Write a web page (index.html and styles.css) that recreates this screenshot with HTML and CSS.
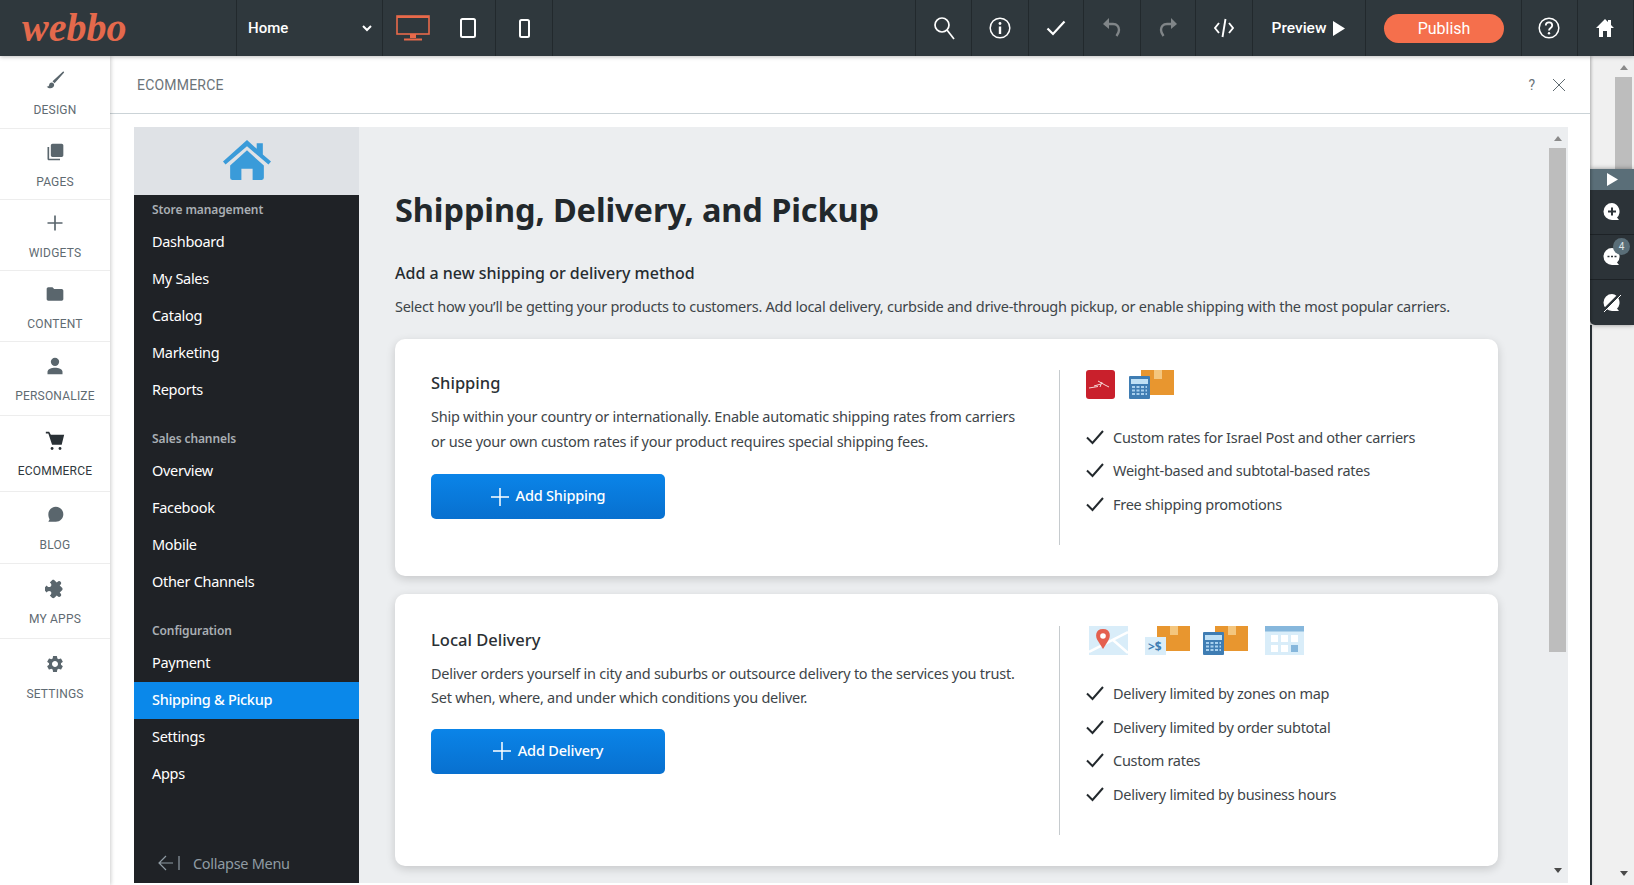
FILE: index.html
```html
<!DOCTYPE html>
<html lang="en">
<head>
    <meta charset="UTF-8">
    <meta name="viewport" content="width=device-width, initial-scale=1.0">
    <title>Webbo - Ecommerce</title>
    <link rel="stylesheet" href="styles.css">
</head>
<body>

<svg class="defs" width="0" height="0">
    <symbol id="check" viewBox="0 0 18 16"><path d="M1 8.5 6.5 14 17 2" fill="none" stroke="#23292d" stroke-width="2"/></symbol>
    <symbol id="box" viewBox="0 0 33 25"><rect width="33" height="25" fill="#e8962f"/><rect x="13" width="8" height="9" fill="#f4c67e"/></symbol>
    <symbol id="calc" viewBox="0 0 21 23"><rect width="21" height="23" rx="1" fill="#3f7db3"/><rect x="2" y="3" width="17" height="5" fill="#bfe0f5"/><path d="M3 11h15M3 14.5h15M3 18h15" stroke="#a8d0ee" stroke-width="2" stroke-dasharray="3 1.5"/></symbol>
</svg>

<header class="topbar">
    <div class="logo-cell"><span class="logo">webbo</span></div>
    <div class="page-select">
        <span>Home</span>
        <svg width="10" height="7" viewBox="0 0 10 7"><path d="M1 1l4 4 4-4" fill="none" stroke="#fff" stroke-width="2"/></svg>
    </div>
    <div class="devices">
        <div class="device device-desktop">
            <svg width="34" height="26" viewBox="0 0 34 26"><rect x="1" y="1" width="32" height="18" fill="none" stroke="#e8694a" stroke-width="1.6"/><rect x="1" y="1" width="32" height="2" fill="#e8694a"/><rect x="14" y="19" width="6" height="4" fill="#e8694a"/><rect x="8" y="23.5" width="18" height="2" fill="#e8694a"/></svg>
        </div>
        <div class="device">
            <svg width="16" height="20" viewBox="0 0 16 20"><rect x="1" y="1" width="14" height="18" rx="1.5" fill="none" stroke="#fff" stroke-width="2"/></svg>
        </div>
    </div>
    <div class="device device-phone">
        <svg width="11" height="19" viewBox="0 0 11 19"><rect x="1" y="1" width="9" height="17" rx="1.5" fill="none" stroke="#fff" stroke-width="2"/></svg>
    </div>
    <div class="topbar-space"></div>
    <div class="tool">
        <svg width="22" height="24" viewBox="0 0 22 24"><circle cx="9" cy="9" r="7" fill="none" stroke="#fff" stroke-width="1.7"/><path d="M14 14l7 9" stroke="#fff" stroke-width="1.7"/></svg>
    </div>
    <div class="tool tool-w57">
        <svg width="22" height="22" viewBox="0 0 22 22"><circle cx="11" cy="11" r="9.8" fill="none" stroke="#fff" stroke-width="1.5"/><circle cx="11" cy="6.5" r="1.4" fill="#fff"/><rect x="9.8" y="9.5" width="2.4" height="7.5" fill="#fff"/></svg>
    </div>
    <div class="tool tool-w55">
        <svg width="20" height="16" viewBox="0 0 20 16"><path d="M1.5 8.5 7 14 18.5 1.5" fill="none" stroke="#fff" stroke-width="2.2"/></svg>
    </div>
    <div class="tool tool-w57">
        <svg width="20" height="20" viewBox="0 0 20 20"><path d="M5 6h6c4 0 6 3 6 6 0 2-1 4-2.500 6" fill="none" stroke="#808588" stroke-width="2.400"/><path d="M7 0v11L1 6z" fill="#808588"/></svg>
    </div>
    <div class="tool tool-w55">
        <svg width="20" height="20" viewBox="0 0 20 20"><path d="M15 6H9c-4 0-6 3-6 6 0 2 1 4 2.500 6" fill="none" stroke="#808588" stroke-width="2.400"/><path d="M13 0v11l6-5z" fill="#808588"/></svg>
    </div>
    <div class="tool tool-w57">
        <svg width="20" height="20" viewBox="0 0 20 20"><path d="M5 5l-4 5 4 5M15 5l4 5-4 5M11.500 1 8.500 19" fill="none" stroke="#fff" stroke-width="1.900"/></svg>
    </div>
    <div class="preview">
        <span>Preview</span>
        <svg width="12" height="15" viewBox="0 0 12 15"><path d="M0 0l12 7.500L0 15z" fill="#fff"/></svg>
    </div>
    <div class="publish-cell"><button class="publish">Publish</button></div>
    <div class="tool tool-end">
        <svg width="22" height="22" viewBox="0 0 22 22"><circle cx="11" cy="11" r="9.800" fill="none" stroke="#fff" stroke-width="1.500"/><path d="M7.800 8.500c0-4.200 6.400-4.200 6.400 0 0 2.500-3.200 2.500-3.200 5" fill="none" stroke="#fff" stroke-width="1.800"/><circle cx="11" cy="16.300" r="1.200" fill="#fff"/></svg>
    </div>
    <div class="tool tool-end">
        <svg width="18" height="18" viewBox="0 0 18 18"><path d="M9 0 0 9h3v9h4v-6h4v6h4V9h3l-3-3V1h-3v2z" fill="#fff"/></svg>
    </div>
</header>

<div class="workspace">
    <nav class="rail">
        <a class="rail-item">
            <svg viewBox="0 0 24 24"><path d="M8 15c-1.700 0-3 1.300-3 3 0 1-1.200 2-3 2 1 1 3 2 4.500 2 2.500 0 4.500-2 4.500-4 0-1.600-1.300-3-3-3zM22 1.500 9 13.500l2.500 2.500L23 3z"/></svg>
            <span>Design</span>
        </a>
        <a class="rail-item">
            <svg viewBox="0 0 24 24"><path d="M5 6H3v14c0 1.100.9 2 2 2h13v-2H5V6zm15-4H9c-1.100 0-2 .9-2 2v12c0 1.100.9 2 2 2h11c1.100 0 2-.9 2-2V4c0-1.100-.9-2-2-2z"/></svg>
            <span>Pages</span>
        </a>
        <a class="rail-item">
            <svg viewBox="0 0 24 24"><path d="M11 3h2v8h8v2h-8v8h-2v-8H3v-2h8z"/></svg>
            <span>Widgets</span>
        </a>
        <a class="rail-item">
            <svg viewBox="0 0 24 24"><path d="M9 4H4c-1.100 0-2 .9-2 2v12c0 1.100.9 2 2 2h16c1.100 0 2-.9 2-2V8c0-1.100-.9-2-2-2h-9L9 4z"/></svg>
            <span>Content</span>
        </a>
        <a class="rail-item">
            <svg viewBox="0 0 24 24"><circle cx="12" cy="7" r="5"/><path d="M3 22v-3c0-3.500 5-5 9-5s9 1.500 9 5v3z"/></svg>
            <span>Personalize</span>
        </a>
        <a class="rail-item rail-active">
            <svg viewBox="0 0 24 24"><path d="M1 1h4l2 3.500h16l-3 12H8.500L4 3H1z"/><circle cx="8.500" cy="21" r="1.700"/><circle cx="18" cy="21" r="1.700"/></svg>
            <span>Ecommerce</span>
        </a>
        <a class="rail-item">
            <svg viewBox="0 0 24 24"><path d="M13 2c5 0 9 4 9 9s-4 9-9 9H4l1.500-3C4.500 15.500 4 13.500 4 11c0-5 4-9 9-9z"/></svg>
            <span>Blog</span>
        </a>
        <a class="rail-item">
            <svg viewBox="0 0 24 24"><path transform="rotate(45 12 12)" d="M20.500 11H19V7c0-1.100-.9-2-2-2h-4V3.500C13 2.120 11.880 1 10.500 1S8 2.120 8 3.500V5H4c-1.100 0-1.990.9-1.990 2v3.800H3.500c1.490 0 2.700 1.210 2.700 2.700s-1.210 2.700-2.700 2.700H2V20c0 1.100.9 2 2 2h3.800v-1.500c0-1.490 1.210-2.700 2.700-2.700 1.490 0 2.700 1.210 2.700 2.700V22H17c1.100 0 2-.9 2-2v-4h1.500c1.380 0 2.500-1.120 2.500-2.500S21.880 11 20.500 11z"/></svg>
            <span>My Apps</span>
        </a>
        <a class="rail-item">
            <svg viewBox="0 0 24 24"><path d="M19.140 12.940c.04-.3.06-.61.06-.94 0-.32-.02-.64-.07-.94l2.030-1.580a.49.49 0 0 0 .12-.61l-1.920-3.320a.488.488 0 0 0-.59-.22l-2.390.96c-.5-.38-1.030-.7-1.620-.94l-.36-2.540a.484.484 0 0 0-.48-.41h-3.840c-.24 0-.43.17-.47.41l-.36 2.540c-.59.24-1.130.57-1.620.94l-2.390-.96c-.22-.08-.47 0-.59.22L2.740 8.870c-.12.21-.08.47.12.61l2.030 1.580c-.05.3-.09.63-.09.94s.02.64.07.94l-2.030 1.580a.49.49 0 0 0-.12.61l1.920 3.320c.12.22.37.29.59.22l2.390-.96c.5.38 1.030.7 1.620.94l.36 2.540c.05.24.24.41.48.41h3.840c.24 0 .44-.17.47-.41l.36-2.540c.59-.24 1.130-.56 1.620-.94l2.390.96c.22.08.47 0 .59-.22l1.920-3.320c.12-.22.07-.47-.12-.61l-2.010-1.580zM12 15.600c-1.980 0-3.600-1.620-3.600-3.600s1.620-3.600 3.600-3.600 3.600 1.620 3.600 3.600-1.620 3.600-3.600 3.600z"/></svg>
            <span>Settings</span>
        </a>
    </nav>

    <main class="panel">
        <div class="panel-head">
            <span class="panel-title">ECOMMERCE</span>
            <span class="panel-help">?</span>
            <svg width="14" height="14" viewBox="0 0 14 14"><path d="M1 1l12 12M13 1 1 13" stroke="#5e6a70"/></svg>
        </div>
        <div class="panel-body">
            <div class="store">
                <aside class="store-nav">
                    <div class="store-home">
                        <svg width="48" height="40" viewBox="0 0 47 39"><path d="M0 21 23.500 0 33 8.500V3h6v11l8 7-2.500 3L23.500 6 2.500 24z" fill="#3a9bd9"/><path d="M7 25 23.500 10 40 25v12a2 2 0 0 1-2 2H29V28H18v11H9a2 2 0 0 1-2-2z" fill="#3a9bd9"/></svg>
                    </div>
                    <div class="store-label store-label-first">Store management</div>
                    <a class="store-link">Dashboard</a>
                    <a class="store-link">My Sales</a>
                    <a class="store-link">Catalog</a>
                    <a class="store-link">Marketing</a>
                    <a class="store-link">Reports</a>
                    <div class="store-label">Sales channels</div>
                    <a class="store-link">Overview</a>
                    <a class="store-link">Facebook</a>
                    <a class="store-link">Mobile</a>
                    <a class="store-link">Other Channels</a>
                    <div class="store-label">Configuration</div>
                    <a class="store-link">Payment</a>
                    <a class="store-link store-link-active">Shipping &amp; Pickup</a>
                    <a class="store-link">Settings</a>
                    <a class="store-link">Apps</a>
                    <div class="collapse">
                        <svg width="23" height="16" viewBox="0 0 23 16"><path d="M9 1 2 8l7 7M2 8h14M22 1v14" fill="none" stroke="#8f9ba3" stroke-width="1.200"/></svg>
                        <span>Collapse Menu</span>
                    </div>
                </aside>

                <section class="content">
                    <h1>Shipping, Delivery, and Pickup</h1>
                    <h2>Add a new shipping or delivery method</h2>
                    <p class="intro">Select how you’ll be getting your products to customers. Add local delivery, curbside and drive-through pickup, or enable shipping with the most popular carriers.</p>

                    <div class="card">
                        <div class="card-main">
                            <h3>Shipping</h3>
                            <p>Ship within your country or internationally. Enable automatic shipping rates from carriers<br>or use your own custom rates if your product requires special shipping fees.</p>
                            <button class="add-btn">
                                <svg width="18" height="18" viewBox="0 0 18 18"><path d="M9 0v18M0 9h18" stroke="#fff" stroke-width="1.500"/></svg>
                                Add Shipping
                            </button>
                        </div>
                        <div class="card-side">
                            <div class="card-icons">
                                <svg width="29" height="29" viewBox="0 0 29 29"><rect width="29" height="29" rx="3" fill="#c9202c"/><path d="M3 18l9-1.500M8 16l7-2M12 11l7 4 4 2M16 12l-2 5" fill="none" stroke="#f7d6d6"/></svg>
                                <svg width="45" height="29" viewBox="0 0 45 29"><use href="#box" x="12" width="33" height="25"/><use href="#calc" y="6" width="21" height="23"/></svg>
                            </div>
                            <ul class="checks">
                                <li><svg width="18" height="16"><use href="#check"/></svg>Custom rates for Israel Post and other carriers</li>
                                <li><svg width="18" height="16"><use href="#check"/></svg>Weight-based and subtotal-based rates</li>
                                <li><svg width="18" height="16"><use href="#check"/></svg>Free shipping promotions</li>
                            </ul>
                        </div>
                    </div>

                    <div class="card card-local">
                        <div class="card-main">
                            <h3>Local Delivery</h3>
                            <p>Deliver orders yourself in city and suburbs or outsource delivery to the services you trust.<br>Set when, where, and under which conditions you deliver.</p>
                            <button class="add-btn">
                                <svg width="18" height="18" viewBox="0 0 18 18"><path d="M9 0v18M0 9h18" stroke="#fff" stroke-width="1.500"/></svg>
                                Add Delivery
                            </button>
                        </div>
                        <div class="card-side">
                            <div class="card-icons card-icons-local">
                                <svg width="39" height="29" viewBox="0 0 39 29"><rect width="39" height="29" fill="#d9edf9"/><path d="M0 26 39 6M24 14l15 13" stroke="#fff" stroke-width="2.500"/><path d="M14 3c-8 0-8 8-5 12l5 8 5-8c3-4 3-12-5-12z" fill="#e4604f"/><circle cx="14" cy="10" r="2.800" fill="#fff"/></svg>
                                <svg class="icon-gap" width="45" height="29" viewBox="0 0 45 29"><use href="#box" x="12" width="33" height="25"/><rect y="11" width="21" height="18" fill="#d9edf9"/><text x="3" y="25" class="rate-text">&gt;$</text></svg>
                                <svg width="45" height="29" viewBox="0 0 45 29"><use href="#box" x="12" width="33" height="25"/><use href="#calc" y="6" width="21" height="23"/></svg>
                                <svg class="icon-gap" width="39" height="29" viewBox="0 0 39 29"><rect width="39" height="29" fill="#d9edf9"/><rect width="39" height="5.500" fill="#86b7dc"/><path d="M6 9h7v7H6zM16 9h7v7h-7zM26 9h7v7h-7zM6 19h7v7H6zM16 19h7v7h-7z" fill="#fff"/><rect x="26" y="19" width="7" height="7" fill="#86b7dc"/></svg>
                            </div>
                            <ul class="checks">
                                <li><svg width="18" height="16"><use href="#check"/></svg>Delivery limited by zones on map</li>
                                <li><svg width="18" height="16"><use href="#check"/></svg>Delivery limited by order subtotal</li>
                                <li><svg width="18" height="16"><use href="#check"/></svg>Custom rates</li>
                                <li><svg width="18" height="16"><use href="#check"/></svg>Delivery limited by business hours</li>
                            </ul>
                        </div>
                    </div>
                </section>

                <div class="scrollbar scrollbar-inner">
                    <i class="arrow-up"></i>
                    <div class="thumb"></div>
                    <i class="arrow-down"></i>
                </div>
            </div>
        </div>
    </main>

    <div class="scrollbar scrollbar-outer">
        <i class="arrow-up"></i>
        <div class="thumb"></div>
        <i class="arrow-down"></i>
        <div class="side-tools">
            <div class="side-toggle">
                <svg width="12" height="13" viewBox="0 0 12 13"><path d="M1 0l11 6.500L1 13z" fill="#fff"/></svg>
            </div>
            <div class="side-btn">
                <svg width="20" height="20" viewBox="0 0 20 20"><path d="M10 1a8.500 8.500 0 1 1 0 17H3l2-2.500A8.500 8.500 0 0 1 10 1z" fill="#fff" transform="matrix(-1 0 0 1 20 0)"/><path d="M10 5.500v8M6 9.500h8" stroke="#2c3338" stroke-width="2"/></svg>
            </div>
            <div class="side-btn">
                <svg width="20" height="20" viewBox="0 0 20 20"><path d="M10 1a8.500 8.500 0 1 1 0 17H3l2-2.500A8.500 8.500 0 0 1 10 1z" fill="#fff" transform="matrix(-1 0 0 1 20 0)"/><path d="M5.500 9.500h9" stroke="#2c3338" stroke-width="1.600" stroke-dasharray="2 1.500"/></svg>
                <span class="side-badge">4</span>
            </div>
            <div class="side-btn">
                <svg width="20" height="20" viewBox="0 0 20 20"><path d="M10 1a8.500 8.500 0 1 1 0 17H3l2-2.500A8.500 8.500 0 0 1 10 1z" fill="#fff" transform="matrix(-1 0 0 1 20 0)"/><path d="M1 18 18 1" stroke="#2c3338" stroke-width="2.500"/><path d="M2 19 19 2" stroke="#fff" stroke-width="1"/></svg>
            </div>
        </div>
    </div>
</div>

</body>
</html>
```

FILE: styles.css
```css
* {
    box-sizing: border-box;
}
body {
    margin: 0;
    height: 885px;
    overflow: hidden;
    display: flex;
    flex-direction: column;
    font-family: "Noto Sans", sans-serif;
    background-color: #fff;
}
.defs {
    display: block;
    height: 0;
}

/* top bar */
.topbar {
    height: 56px;
    flex: none;
    display: flex;
    background-color: #2f383d;
    color: #fff;
    font-family: Roboto, sans-serif;
    position: relative;
    z-index: 3;
    box-shadow: 0 1px 4px rgba(0, 0, 0, 0.25);
}
.topbar > div {
    display: flex;
    align-items: center;
    justify-content: center;
    border-right: 1px solid #22292d;
}
.topbar > .logo-cell {
    width: 237px;
    padding-left: 22px;
    justify-content: flex-start;
}
.logo {
    font-family: "Liberation Serif", serif;
    font-style: italic;
    font-weight: bold;
    font-size: 40px;
    line-height: 50px;
    color: #e4694c;
}
.topbar > .page-select {
    width: 146px;
    justify-content: space-between;
    padding: 0 10px 0 11px;
    font-size: 15px;
    font-weight: 500;
}
.topbar > .devices {
    width: 113px;
    padding-right: 2px;
}
.device {
    flex: 1;
    display: flex;
    align-items: center;
    justify-content: center;
}
.device-desktop {
    flex: none;
    width: 60px;
}
.topbar > .device-phone {
    flex: none;
    width: 57px;
}
.topbar > .topbar-space {
    flex: 1;
}
.topbar > .tool {
    width: 56px;
}
.topbar > .tool-w57 {
    width: 57px;
}
.topbar > .tool-w55 {
    width: 55px;
}
.topbar > .tool-end {
    padding-right: 2px;
}
.topbar > .preview {
    width: 113px;
    gap: 7px;
    padding-right: 1px;
    font-size: 15.500px;
    font-weight: 500;
}
.topbar > .publish-cell {
    width: 156px;
    justify-content: flex-start;
    padding-left: 18px;
}
.publish {
    width: 120px;
    height: 29px;
    border: 0;
    border-radius: 15px;
    background-color: #f56f4c;
    color: #fff;
    font-family: Roboto, sans-serif;
    font-size: 16px;
}

.workspace {
    flex: 1;
    display: flex;
    min-height: 0;
}

/* left rail */
.rail {
    width: 110px;
    flex: none;
    display: grid;
    grid-template-rows: 73px 71px 71px 71px 74px 76px 72px 75px 75px;
    align-content: start;
    background-color: #fff;
    box-shadow: 1px 0 4px rgba(0, 0, 0, 0.2);
    position: relative;
    z-index: 2;
}
.rail-item {
    display: flex;
    flex-direction: column;
    align-items: center;
    justify-content: center;
    gap: 11px;
    border-bottom: 1px solid #ededed;
    color: #5f6b72;
    font-family: Roboto, sans-serif;
    font-size: 12px;
    line-height: 14px;
    letter-spacing: 0.2px;
    text-transform: uppercase;
}
.rail-item:last-child {
    border-bottom: 0;
}
.rail-item svg {
    width: 20px;
    height: 24px;
    fill: #5a666d;
}
.rail-active {
    color: #2f383d;
}
.rail-active svg {
    fill: #2a3136;
}

/* ecommerce panel */
.panel {
    flex: 1;
    min-width: 0;
    display: flex;
    flex-direction: column;
    background-color: #fff;
    position: relative;
    z-index: 1;
    box-shadow: 1px 0 3px rgba(0, 0, 0, 0.3);
}
.panel-head {
    height: 58px;
    flex: none;
    display: flex;
    align-items: center;
    gap: 17px;
    padding: 0 24px 0 27px;
    border-bottom: 1px solid #cbd3d7;
}
.panel-title {
    flex: 1;
    font-family: Roboto, sans-serif;
    font-size: 14px;
    letter-spacing: 0.2px;
    color: #6b7479;
}
.panel-help {
    font-family: Roboto, sans-serif;
    font-size: 14px;
    color: #6b7479;
}
.panel-body {
    flex: 1;
    min-height: 0;
    display: flex;
    padding: 13px 22px 2px 24px;
}
.store {
    flex: 1;
    min-width: 0;
    display: flex;
    background-color: #eceef0;
}

/* store sidebar */
.store-nav {
    width: 225px;
    flex: none;
    display: flex;
    flex-direction: column;
    background-color: #1f2226;
    color: #fff;
}
.store-home {
    height: 68px;
    flex: none;
    display: flex;
    align-items: center;
    justify-content: center;
    padding-bottom: 3px;
    background-color: #dfe2e6;
}
.store-label {
    height: 30px;
    margin-top: 15px;
    padding-left: 18px;
    font-size: 12px;
    font-weight: 600;
    line-height: 30px;
    color: #a9afb4;
    letter-spacing: -0.1px;
}
.store-label-first {
    margin-top: 0;
}
.store-link {
    height: 37px;
    padding-left: 18px;
    font-size: 14.500px;
    line-height: 35px;
    letter-spacing: -0.3px;
}
.store-label + .store-link {
    margin-top: -1px;
}
.store-link-active {
    background-color: #0a88ea;
    font-weight: 500;
}
.collapse {
    margin-top: auto;
    height: 41px;
    display: flex;
    align-items: center;
    gap: 13px;
    padding-left: 23px;
    font-size: 14.500px;
    letter-spacing: -0.3px;
    color: #8f9ba3;
}

/* content */
.content {
    flex: 1;
    min-width: 0;
    padding: 61px 51px 0 36px;
    overflow: hidden;
}
h1 {
    margin: 0;
    font-size: 32.500px;
    font-weight: 700;
    line-height: 44px;
    letter-spacing: -0.1px;
    color: #22282c;
}
h2 {
    margin: 29px 0 0;
    font-size: 16px;
    font-weight: 500;
    line-height: 24px;
    color: #262c30;
}
.intro {
    margin: 9px 0 0;
    font-size: 14.500px;
    line-height: 24px;
    letter-spacing: -0.26px;
    color: #3e4549;
}
.card {
    margin: 21px 0 18px;
    padding: 31px 0 0 36px;
    display: flex;
    align-items: stretch;
    background-color: #fff;
    border-radius: 10px;
    box-shadow: 0 3px 10px rgba(0, 0, 0, 0.16);
}
.card + .card {
    margin-top: 18px;
}
.card-local {
    padding-top: 32px;
}
.card-main {
    width: 628px;
    flex: none;
}
.card-local .card-main {
    padding-top: 1px;
}
h3 {
    margin: 0;
    font-size: 16.500px;
    font-weight: 500;
    line-height: 26px;
    color: #2a3034;
}
.card-main p {
    margin: 8px 0 0;
    font-size: 14.500px;
    line-height: 24.500px;
    letter-spacing: -0.25px;
    color: #3e4549;
}
.add-btn {
    width: 234px;
    height: 45px;
    margin-top: 21px;
    display: flex;
    align-items: center;
    justify-content: center;
    gap: 7px;
    padding: 0 0 3px;
    border: 0;
    border-radius: 5px;
    background: linear-gradient(#0a84e8, #0870cf);
    color: #fff;
    font-family: "Noto Sans", sans-serif;
    font-size: 14.500px;
    font-weight: 500;
    letter-spacing: -0.2px;
}
.card-local .add-btn {
    margin-top: 19px;
}
.add-btn svg {
    margin-top: 3px;
}
.card-side {
    flex: 1;
    margin-bottom: 31px;
    padding: 0 0 24px 26px;
    border-left: 1px solid #c6cbce;
}
.card-icons {
    height: 29px;
    display: flex;
    gap: 14px;
}
.card-icons-local {
    gap: 13px;
    padding-left: 3px;
    margin-bottom: 22px;
}
.icon-gap {
    margin-left: 4px;
}
.rate-text {
    font-family: "Noto Sans", sans-serif;
    font-size: 12px;
    font-weight: 700;
    fill: #3f7db3;
}
.checks {
    list-style: none;
    margin: 21px 0 0;
    padding: 0;
}
.card-icons-local + .checks {
    margin-top: 0;
}
.checks li {
    height: 33.500px;
    display: flex;
    align-items: center;
    gap: 9px;
    font-size: 14.500px;
    letter-spacing: -0.28px;
    color: #3e4549;
}

/* scrollbars */
.scrollbar {
    flex: none;
    display: flex;
    flex-direction: column;
    align-items: center;
}
.arrow-up, .arrow-down {
    width: 0;
    height: 0;
    border-left: 4.500px solid transparent;
    border-right: 4.500px solid transparent;
}
.arrow-up {
    border-bottom: 5px solid #8a8a8a;
}
.arrow-down {
    margin-top: auto;
    border-top: 5px solid #4a4a4a;
}
.scrollbar-inner {
    width: 19px;
    padding: 9px 2px 10px 0;
}
.scrollbar-inner .thumb {
    width: 17px;
    height: 504px;
    margin-top: 7px;
    background-color: #bdbdbd;
}
.scrollbar-outer {
    width: 44px;
    padding: 9px 2px 9px 25px;
    /* the dark edge only shows below the floating tools */
    background: linear-gradient(#2f383d, #2f383d) 0 269px / 2px 100% no-repeat, #f0f0f0;
    position: relative;
}
.scrollbar-outer .thumb {
    width: 17px;
    height: 130px;
    margin-top: 7px;
    background-color: #bdbdbd;
}

/* floating tools over the outer scrollbar */
.side-tools {
    position: absolute;
    top: 113px;
    left: 0;
    width: 44px;
    display: flex;
    flex-direction: column;
    background-color: #2c3338;
    border-bottom-left-radius: 5px;
    box-shadow: 0 0 5px rgba(0, 0, 0, 0.4);
}
.side-toggle {
    height: 21px;
    display: flex;
    align-items: center;
    justify-content: center;
    background-color: #5a6e78;
}
.side-btn {
    height: 45px;
    display: flex;
    align-items: center;
    justify-content: center;
    position: relative;
    border-bottom: 1px solid #1d2226;
}
.side-btn:last-child {
    border-bottom: 0;
}
.side-badge {
    position: absolute;
    top: 3px;
    right: 4px;
    width: 17px;
    height: 17px;
    border-radius: 50%;
    background-color: #5a6e78;
    color: #dfe5e8;
    font-family: Roboto, sans-serif;
    font-size: 10px;
    line-height: 17px;
    text-align: center;
}
```
